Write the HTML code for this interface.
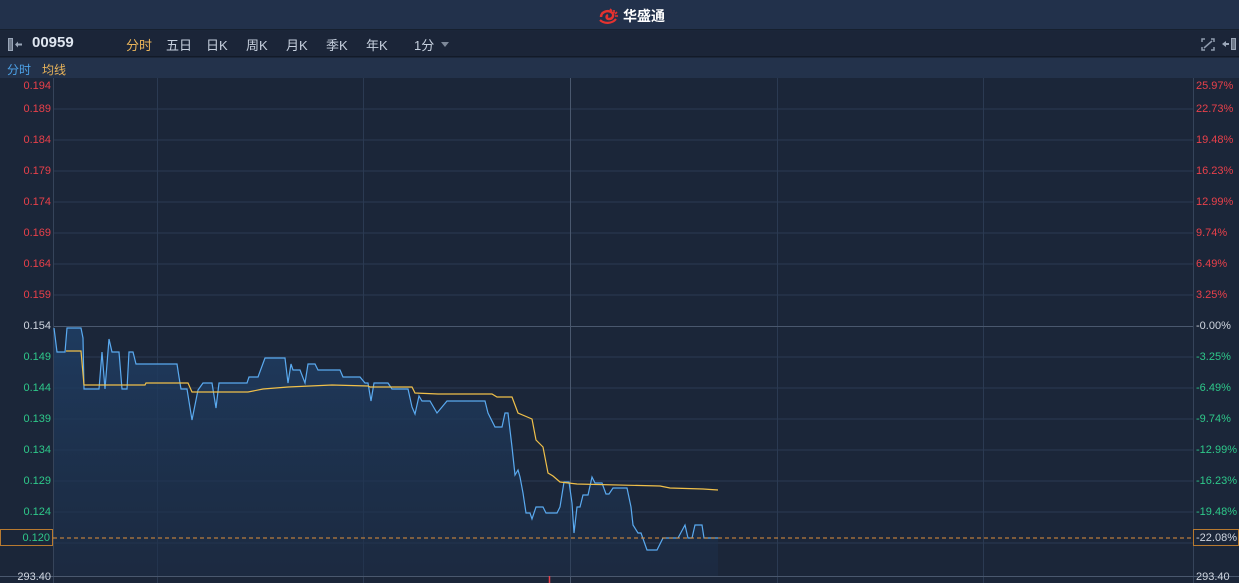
<!DOCTYPE html>
<html><head><meta charset="utf-8">
<style>
*{margin:0;padding:0;box-sizing:border-box}
body{width:1239px;height:583px;overflow:hidden;background:#1b2639;font-family:"Liberation Sans","Noto Sans CJK SC",sans-serif;position:relative}
.hdr{position:absolute;left:0;top:0;width:1239px;height:30px;background:#22314b;border-bottom:1px solid #16202f}
.logo{position:absolute;left:598px;top:6px;display:flex;align-items:center;gap:3px;color:#fff;font-weight:bold;font-size:14px}
.tb{position:absolute;left:0;top:31px;width:1239px;height:26px;background:#1b2538;border-bottom:1px solid #121a28;color:#c6d0de;font-size:13px}
.tb span{position:absolute;top:4px}
.lg{position:absolute;left:0;top:58px;width:1239px;height:20px;background:#23324b;font-size:12px}
.ax{position:absolute;font-size:11px;line-height:12px}
.l{right:1188px;text-align:right}
.r{left:1196px}
.red{color:#e8404a}.grn{color:#2ec88a}.wh{color:#d0d6e0}
</style></head><body>
<div class="hdr"><div class="logo">
<svg width="22" height="16" viewBox="0 0 22 16"><path d="M3 9 C3 4 9 2 13 4 C17 6 15 11 11 11 C8 11 8 8 10 7" fill="none" stroke="#e5322f" stroke-width="2.5"/><path d="M12 1 L14 3 M16 2 L16 5 M19 4 L17 6 M20 8 L17 8" stroke="#e5322f" stroke-width="1.6"/><path d="M2 12 C6 16 14 16 18 11" fill="none" stroke="#e5322f" stroke-width="2.2"/></svg>
<span>华盛通</span></div></div>
<div class="tb">
<svg style="position:absolute;left:8px;top:7px" width="16" height="13"><rect x="0.5" y="0.5" width="4" height="12" fill="#6d7889" stroke="#9aa6b8"/><path d="M7 6.5 L10 3.5 L10 5.5 L14 5.5 L14 7.5 L10 7.5 L10 9.5 Z" fill="#9aa6b8"/></svg>
<span style="left:32px;top:3px;font-weight:bold;font-size:15px;color:#dfe6f0">00959</span>
<span style="left:126px;color:#e9b45a">分时</span>
<span style="left:166px">五日</span>
<span style="left:206px">日K</span>
<span style="left:246px">周K</span>
<span style="left:286px">月K</span>
<span style="left:326px">季K</span>
<span style="left:366px">年K</span>
<span style="left:414px">1分</span>
<span style="left:441px;top:11px;width:0;height:0;border-left:4px solid transparent;border-right:4px solid transparent;border-top:5px solid #7d8899"></span>
<svg style="position:absolute;left:1201px;top:7px" width="14" height="13" fill="none" stroke="#8f9bae" stroke-width="1.5"><path d="M1 4V1H4M10 1H13V4M13 9V12H10M4 12H1V9M3 10L11 3"/></svg>
<svg style="position:absolute;left:1221px;top:6px" width="16" height="14"><path d="M1 7 L5 4 L5 6 L8 6 L8 8 L5 8 L5 10Z" fill="#9aa6b8"/><rect x="10.5" y="1.5" width="4" height="11" fill="#6d7889" stroke="#9aa6b8"/></svg>
</div>
<div class="lg"><span style="position:absolute;left:7px;top:3px;color:#4da2e8">分时</span><span style="position:absolute;left:42px;top:3px;color:#e9b45a">均线</span></div>

<svg style="position:absolute;left:0;top:78px" width="1239" height="505">
<defs><linearGradient id="g" x1="0" y1="0" x2="0" y2="1"><stop offset="0" stop-color="#1f3d63" stop-opacity=".9"/><stop offset="1" stop-color="#1c2e48" stop-opacity=".5"/></linearGradient></defs>
<g stroke="#2b3a52" stroke-width="1">
<line x1="53" y1="31" x2="1193" y2="31"/><line x1="53" y1="62" x2="1193" y2="62"/><line x1="53" y1="93" x2="1193" y2="93"/><line x1="53" y1="124" x2="1193" y2="124"/><line x1="53" y1="155" x2="1193" y2="155"/><line x1="53" y1="186" x2="1193" y2="186"/><line x1="53" y1="217" x2="1193" y2="217"/><line x1="53" y1="279" x2="1193" y2="279"/><line x1="53" y1="310" x2="1193" y2="310"/><line x1="53" y1="341" x2="1193" y2="341"/><line x1="53" y1="372" x2="1193" y2="372"/><line x1="53" y1="403" x2="1193" y2="403"/><line x1="53" y1="434" x2="1193" y2="434"/><line x1="53" y1="465" x2="1193" y2="465"/>
<line x1="157.5" y1="0" x2="157.5" y2="505"/><line x1="363.5" y1="0" x2="363.5" y2="505"/><line x1="777.5" y1="0" x2="777.5" y2="505"/><line x1="983.5" y1="0" x2="983.5" y2="505"/>
</g>
<line x1="53" y1="248.5" x2="1193" y2="248.5" stroke="#4a586e"/>
<line x1="570.5" y1="0" x2="570.5" y2="505" stroke="#4a586e"/>
<line x1="53.5" y1="0" x2="53.5" y2="505" stroke="#36445a"/>
<line x1="1193.5" y1="0" x2="1193.5" y2="505" stroke="#36445a"/>
<line x1="0" y1="498.5" x2="1239" y2="498.5" stroke="#4a586e"/>
<line x1="549.5" y1="498" x2="549.5" y2="505" stroke="#e8404a" stroke-width="1.5"/>
<g transform="translate(0,-78)">
<polygon fill="url(#g)" points="54,328 57,352 65,352 67,328 81,328 83,338 84,389 99,389 102,352 105,389 109,339 112,352 119,352 122,389 127,389 129,352 133,352 136,364 177,364 179,377 181,389 187,389 192,420 198,390 203,383 212,383 216,408 219,383 247,383 249,377 258,377 265,358 285,358 288,383 291,364 293,370 300,370 305,383 308,364 315,364 318,370 340,370 343,377 360,377 365,383 368,383 371,401 374,383 388,383 392,389 408,389 412,407 415,414 419,396 422,401 430,401 437,413 442,407 447,401 485,401 488,413 495,427 502,427 505,413 508,413 512,447 515,475 518,470 520,477 523,493 526,513 530,513 532,519 536,507 543,507 546,513 557,513 560,507 564,482 569,482 572,503 574,533 577,507 580,507 583,495 588,495 592,477 595,483 602,483 606,494 609,494 613,488 627,488 631,507 633,525 638,533 641,533 647,550 657,550 663,538 678,538 685,525 688,538 692,538 695,525 702,525 704,538 718,538 718,576 54,576"/>
<polyline fill="none" stroke="#5aaaf0" stroke-width="1.2" points="54,328 57,352 65,352 67,328 81,328 83,338 84,389 99,389 102,352 105,389 109,339 112,352 119,352 122,389 127,389 129,352 133,352 136,364 177,364 179,377 181,389 187,389 192,420 198,390 203,383 212,383 216,408 219,383 247,383 249,377 258,377 265,358 285,358 288,383 291,364 293,370 300,370 305,383 308,364 315,364 318,370 340,370 343,377 360,377 365,383 368,383 371,401 374,383 388,383 392,389 408,389 412,407 415,414 419,396 422,401 430,401 437,413 442,407 447,401 485,401 488,413 495,427 502,427 505,413 508,413 512,447 515,475 518,470 520,477 523,493 526,513 530,513 532,519 536,507 543,507 546,513 557,513 560,507 564,482 569,482 572,503 574,533 577,507 580,507 583,495 588,495 592,477 595,483 602,483 606,494 609,494 613,488 627,488 631,507 633,525 638,533 641,533 647,550 657,550 663,538 678,538 685,525 688,538 692,538 695,525 702,525 704,538 718,538"/>
<polyline fill="none" stroke="#f0c04a" stroke-width="1.2" points="66,351 81,351 84,385 145,385 146,383 188,383 192,392 248,392 263,389 288,387 332,385 368,386 370,387 412,387 415,393 438,394 492,394 497,397 512,397 518,413 532,419 536,440 543,447 548,473 553,476 560,482 577,484 660,486 670,488 703,489 718,490"/>
<line x1="53" y1="538" x2="1193" y2="538" stroke="#e0903a" stroke-width="1" stroke-dasharray="4,3"/>
</g>
</svg>

<div class="ax l red" style="top:80px">0.194</div>
<div class="ax l red" style="top:103px">0.189</div>
<div class="ax l red" style="top:134px">0.184</div>
<div class="ax l red" style="top:165px">0.179</div>
<div class="ax l red" style="top:196px">0.174</div>
<div class="ax l red" style="top:227px">0.169</div>
<div class="ax l red" style="top:258px">0.164</div>
<div class="ax l red" style="top:289px">0.159</div>
<div class="ax l wh" style="top:320px">0.154</div>
<div class="ax l grn" style="top:351px">0.149</div>
<div class="ax l grn" style="top:382px">0.144</div>
<div class="ax l grn" style="top:413px">0.139</div>
<div class="ax l grn" style="top:444px">0.134</div>
<div class="ax l grn" style="top:475px">0.129</div>
<div class="ax l grn" style="top:506px">0.124</div>
<div class="ax l grn" style="top:537px">0.119</div>
<div class="ax r red" style="top:80px">25.97%</div>
<div class="ax r red" style="top:103px">22.73%</div>
<div class="ax r red" style="top:134px">19.48%</div>
<div class="ax r red" style="top:165px">16.23%</div>
<div class="ax r red" style="top:196px">12.99%</div>
<div class="ax r red" style="top:227px">9.74%</div>
<div class="ax r red" style="top:258px">6.49%</div>
<div class="ax r red" style="top:289px">3.25%</div>
<div class="ax r wh" style="top:320px">-0.00%</div>
<div class="ax r grn" style="top:351px">-3.25%</div>
<div class="ax r grn" style="top:382px">-6.49%</div>
<div class="ax r grn" style="top:413px">-9.74%</div>
<div class="ax r grn" style="top:444px">-12.99%</div>
<div class="ax r grn" style="top:475px">-16.23%</div>
<div class="ax r grn" style="top:506px">-19.48%</div>
<div class="ax r grn" style="top:537px">-22.73%</div>
<div class="ax" style="left:0;top:529px;width:53px;height:17px;border:1px solid #b87a30;background:#1b2639;color:#2ec88a;text-align:right;padding:2px 2px 0 0">0.120</div>
<div class="ax" style="left:1193px;top:529px;width:46px;height:17px;border:1px solid #b87a30;background:#1b2639;color:#d0d6e0;padding:2px 0 0 2px">-22.08%</div>
<div class="ax wh" style="right:1188px;top:571px;text-align:right">293.40</div>
<div class="ax wh" style="left:1196px;top:571px">293.40</div>
</body></html>
